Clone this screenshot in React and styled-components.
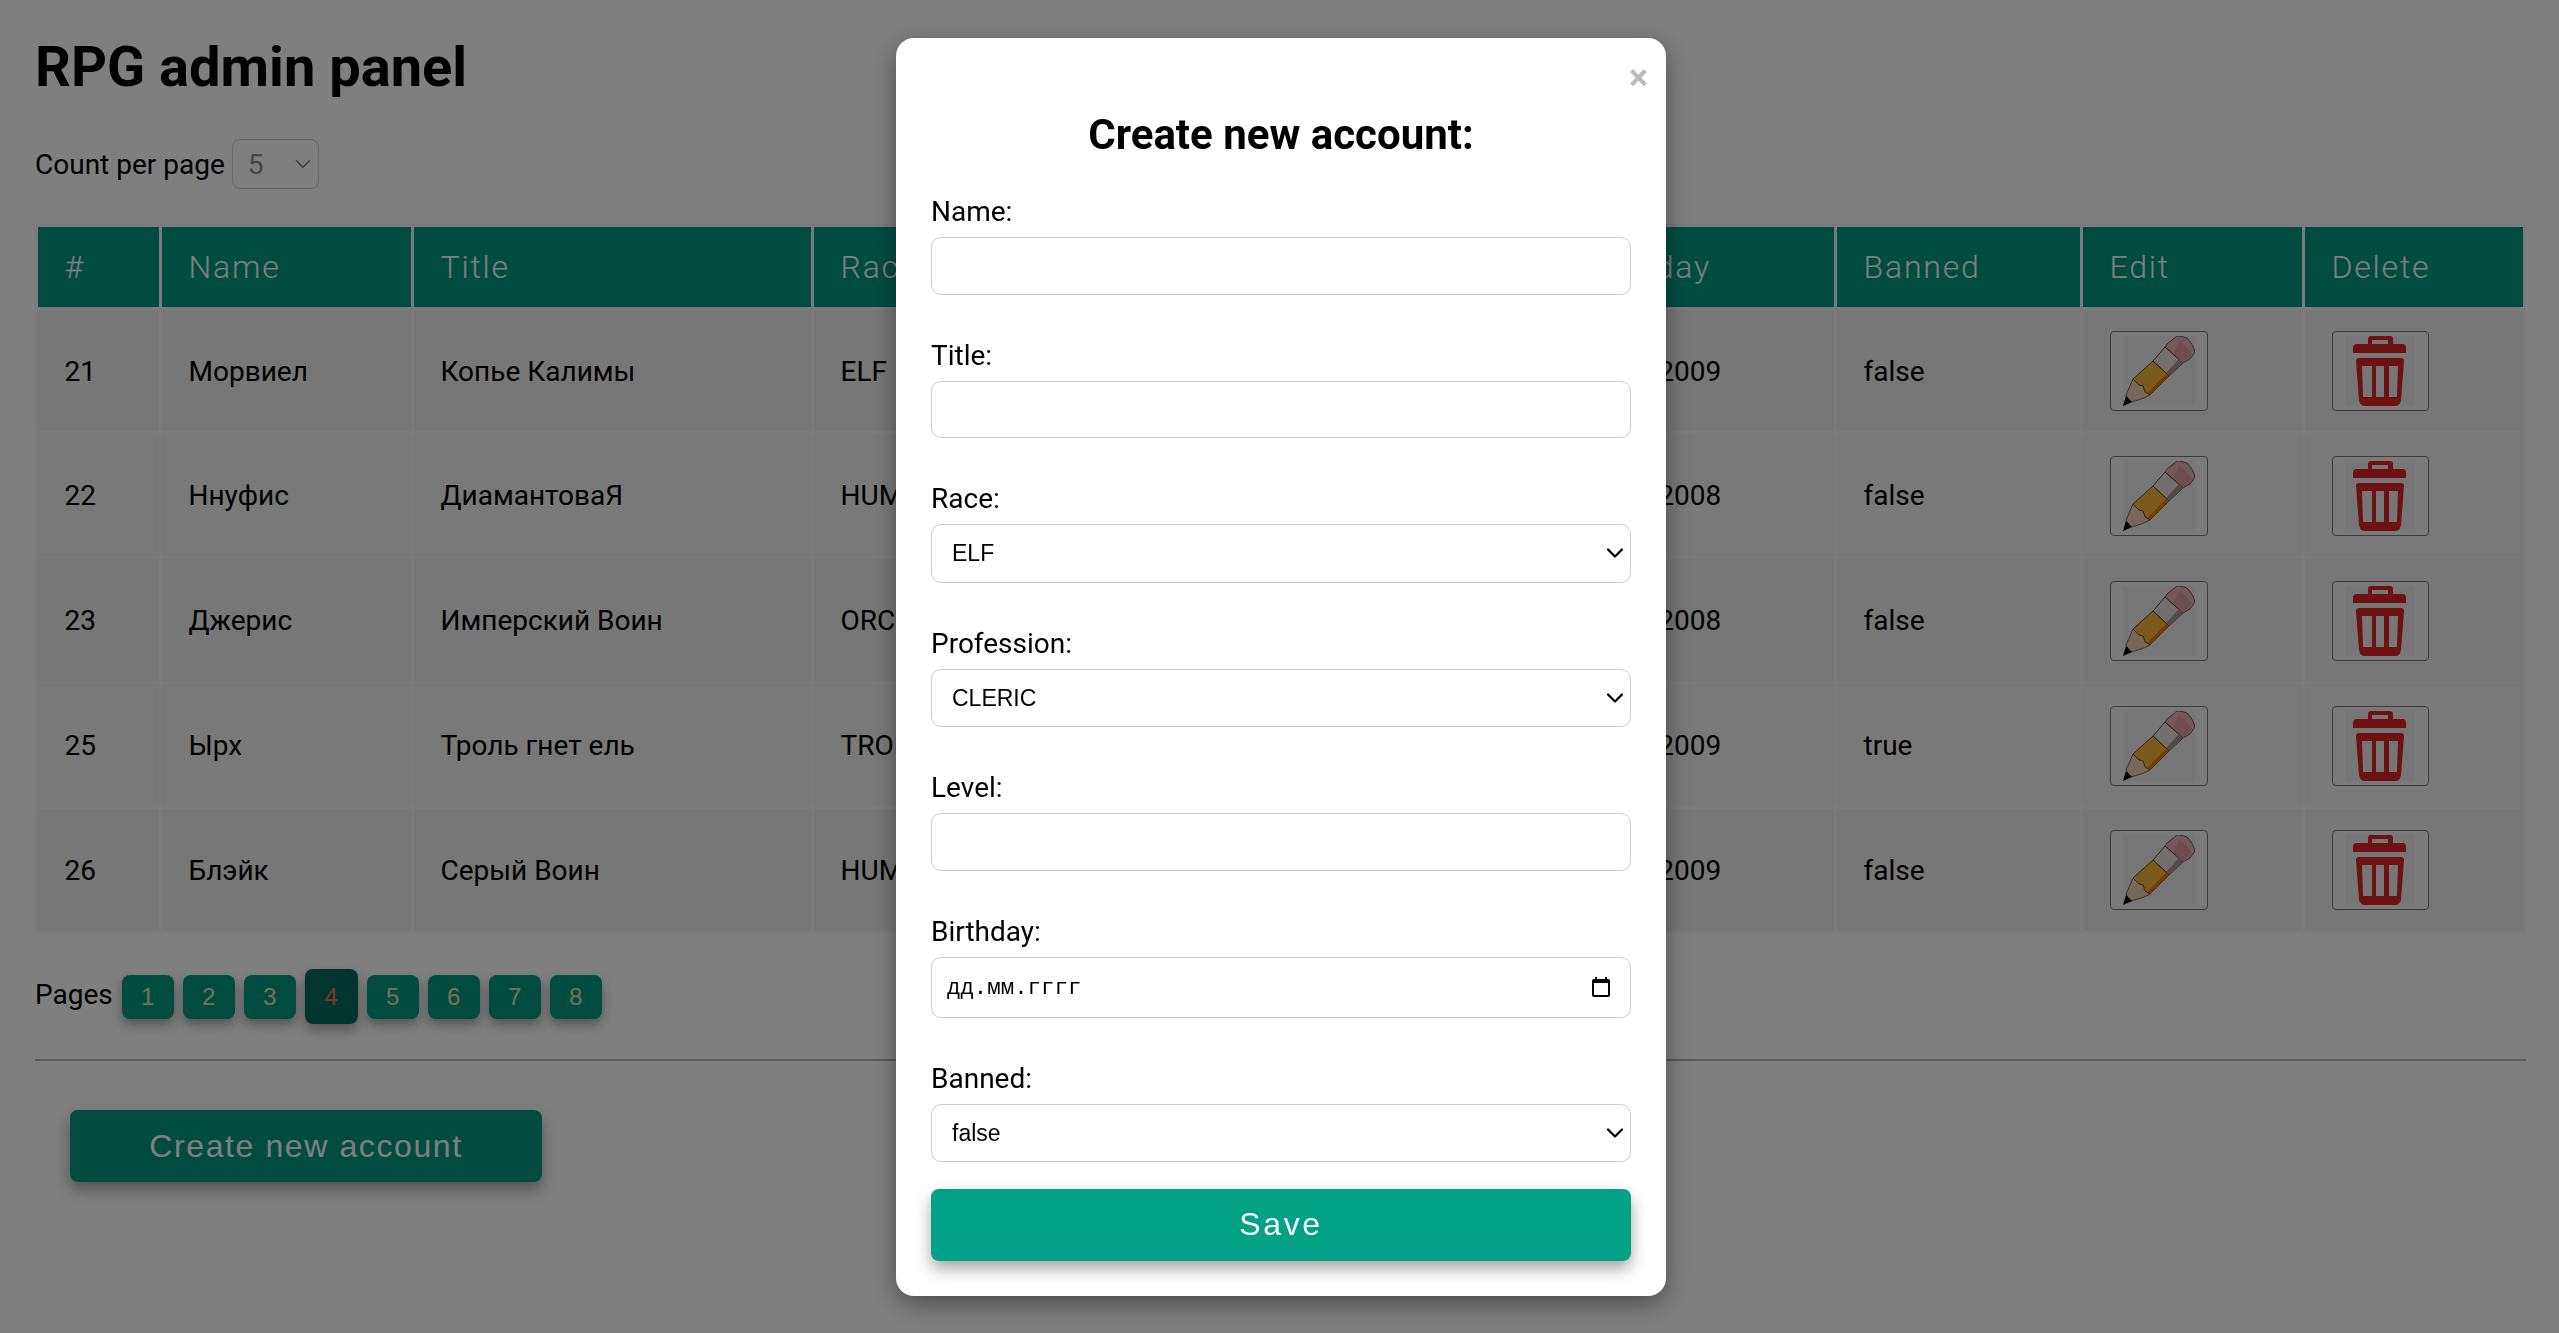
import React from "react";
import styled, { createGlobalStyle } from "styled-components";
import { ChevronDown } from "lucide-react";

const GlobalStyle = createGlobalStyle`
  html, body {
    margin: 0;
    height: 100%;
    background: #fff;
    font-family: Roboto, "Liberation Sans", sans-serif;
    color: #000;
  }
`;

const Page = styled.div`
  padding: 0 33px 0 35px;
  height: 1333px;
  box-sizing: border-box;
  overflow: hidden;
`;

const Heading = styled.h1`
  margin: 0;
  padding-top: 31px;
  font-size: 56px;
  line-height: 72px;
  font-weight: 700;
`;

const CountRow = styled.div`
  display: flex;
  align-items: center;
  gap: 7px;
  margin: 36px 0 35px;
  font-size: 28px;
`;

const CountBox = styled.div`
  position: relative;
  width: 87px;
  height: 50px;
`;

const CountSelect = styled.select`
  appearance: none;
  box-sizing: border-box;
  width: 100%;
  height: 100%;
  padding: 0 0 0 15px;
  border: 1px solid #ccc;
  border-radius: 8px;
  background: #fff;
  color: #888;
  font-family: Roboto, sans-serif;
  font-size: 28px;
`;

const Arrow = styled(ChevronDown)`
  position: absolute;
  right: ${(p) => p.$right}px;
  top: 50%;
  transform: translateY(-50%);
  color: ${(p) => p.$color};
  pointer-events: none;
`;

const Table = styled.table`
  table-layout: fixed;
  width: 2491px;
  border-collapse: separate;
  border-spacing: 3px;
  background: #f7f7f7;
`;

const HeadCell = styled.th`
  height: 80px;
  padding: 0 0 0 26.5px;
  box-sizing: border-box;
  background: #009a80;
  color: #fff;
  text-align: left;
  font-size: 32px;
  font-weight: 300;
  letter-spacing: 1.8px;
  white-space: nowrap;
  overflow: hidden;
`;

const Row = styled.tr`
  background: ${(p) => (p.$odd ? "#eeeeee" : "#f3f3f3")};
`;

const Cell = styled.td`
  height: ${(p) => p.$height}px;
  padding: 1px 0 0 26.5px;
  box-sizing: border-box;
  font-size: 28px;
  white-space: nowrap;
  overflow: hidden;
`;

const IconButton = styled.button`
  display: flex;
  align-items: center;
  justify-content: center;
  box-sizing: border-box;
  width: ${(p) => p.$width}px;
  height: 80px;
  padding: 0;
  border: 1px solid #767676;
  border-radius: 4px;
  background: #f5f5f5;
`;

const SoftGroup = styled.g`
  filter: blur(0.35px);
`;

const Pager = styled.div`
  display: flex;
  align-items: center;
  height: 55px;
  margin: 36px 0 0;
  font-size: 28px;
`;

const PagerLabel = styled.span`
  margin-right: 9px;
  position: relative;
  top: -2px;
`;

const PageButton = styled.button`
  box-sizing: border-box;
  width: ${(p) => (p.$active ? 53 : 52)}px;
  height: ${(p) => (p.$active ? 55 : 44)}px;
  margin-right: 9px;
  padding: 0;
  border: 0;
  border-radius: 8px;
  background: ${(p) => (p.$active ? "#056a5c" : "#009a80")};
  color: ${(p) => (p.$active ? "#e87a50" : "#f0e0a8")};
  font-family: "Liberation Sans", sans-serif;
  font-size: 24px;
  box-shadow: 0 6px 12px rgba(0, 0, 0, 0.35);
`;

const Divider = styled.hr`
  margin: 35px 0 0;
  height: 0;
  border: 0;
  border-top: 2px solid #b4b4b4;
`;

const CreateButton = styled.button`
  display: block;
  box-sizing: border-box;
  width: 472px;
  height: 72px;
  margin: 49px 0 0 35px;
  padding: 0;
  border: 0;
  border-radius: 8px;
  background: #009a80;
  color: #fff;
  font-family: "Liberation Sans", sans-serif;
  font-size: 32px;
  letter-spacing: 1.6px;
  box-shadow: 0 8px 16px rgba(0, 0, 0, 0.35);
`;

const SaveButton = styled(CreateButton)`
  width: 100%;
  margin: 0;
  padding-bottom: 1px;
  background: #03a185;
  letter-spacing: 2.6px;
`;

const Overlay = styled.div`
  position: fixed;
  inset: 0;
  display: flex;
  justify-content: center;
  align-items: flex-start;
  padding: 38px 0 0 3px;
  background: rgba(0, 0, 0, 0.5);
`;

const Modal = styled.div`
  position: relative;
  box-sizing: border-box;
  width: 770px;
  height: 1258px;
  padding: 69px 35px 0;
  border-radius: 18px;
  background: #fff;
  box-shadow: 0 8px 24px rgba(0, 0, 0, 0.4);
`;

const Close = styled.span`
  position: absolute;
  top: 18px;
  right: 18px;
  color: #bbb;
  font-size: 36px;
  line-height: 44px;
  font-weight: 700;
`;

const ModalTitle = styled.h2`
  margin: 0 0 32px;
  text-align: center;
  font-size: 42px;
  line-height: 56px;
  font-weight: 700;
`;

const Field = styled.div`
  margin-bottom: ${(p) => (p.$last ? 26.5 : 44)}px;
`;

const Label = styled.label`
  display: block;
  height: 33px;
  margin-bottom: 9px;
  font-size: 28px;
  line-height: 33px;
`;

const TextInput = styled.input`
  display: block;
  box-sizing: border-box;
  width: 100%;
  height: 57.5px;
  border: 1px solid #ccc;
  border-radius: 10px;
  background: #fff;
`;

const SelectBox = styled.div`
  position: relative;
  height: 58.5px;
`;

const FormSelect = styled.select`
  appearance: none;
  box-sizing: border-box;
  width: 100%;
  height: 100%;
  padding: 0 0 0 20px;
  border: 1px solid #ccc;
  border-radius: 10px;
  background: #fff;
  color: #000;
  font-family: "Liberation Sans", sans-serif;
  font-size: 23px;
`;

const DateBox = styled.div`
  display: flex;
  align-items: center;
  justify-content: space-between;
  box-sizing: border-box;
  height: 61px;
  padding: 0 20px 0 15px;
  border: 1px solid #ccc;
  border-radius: 10px;
  font-family: "Liberation Mono", monospace;
  font-size: 22.4px;
`;

const DateText = styled.span`
  padding-top: 2px;
`;

const rows = [
  { id: 21, name: "Морвиел", title: "Копье Калимы", race: "ELF", profession: "WARRIOR", level: 35, birthday: "11.05.2009", banned: "false" },
  { id: 22, name: "Ннуфис", title: "ДиамантоваЯ", race: "HUMAN", profession: "CLERIC", level: 43, birthday: "02.11.2008", banned: "false" },
  { id: 23, name: "Джерис", title: "Имперский Воин", race: "ORC", profession: "WARLOCK", level: 24, birthday: "23.08.2008", banned: "false" },
  { id: 25, name: "Ырх", title: "Троль гнет ель", race: "TROLL", profession: "WARRIOR", level: 18, birthday: "14.03.2009", banned: "true" },
  { id: 26, name: "Блэйк", title: "Серый Воин", race: "HUMAN", profession: "PALADIN", level: 27, birthday: "06.07.2009", banned: "false" },
];

const rowHeights = [121, 122, 122, 122, 121];

const columns = [
  ["#", 121],
  ["Name", 249],
  ["Title", 397],
  ["Race", 286],
  ["Profession", 277],
  ["Level", 168],
  ["Birthday", 280],
  ["Banned", 243],
  ["Edit", 219],
  ["Delete", 218],
];

function PencilIcon() {
  return (
    <svg width="72" height="70" viewBox="0 0 72 70">
      <rect width="72" height="70" fill="#ececec" />
      <SoftGroup>
        <path d="M42 11 L44 8 L54 0 C58 0 61 1 64 2 C68 6 71 11 72 16 L67 23 L60 27 Z" fill="#e8b0b4" stroke="#5a4a4a" strokeWidth="0.9" />
        <path d="M56 5 C61 8 66 13 69 18 L60 27 L50 18 Z" fill="#dc9aa0" />
        <path d="M30 25 L42 11 L60 27 L46 40 Z" fill="#e6dede" stroke="#4a4040" strokeWidth="1" />
        <path d="M46 40 L60 27 L56 23 L43 37 Z" fill="#a89490" />
        <path d="M10 43 L30 25 L46 40 L27 59 L22 56 L20 50 L16 49 Z" fill="#f5b53a" stroke="#4a3818" strokeWidth="0.9" />
        <path d="M46 40 L27 59 L24.5 56.5 L43.5 37.5 Z" fill="#e87a10" />
        <path d="M10 43 L16 49 L20 50 L22 56 L27 59 C20 63 12 65 7 66 L3 59 Z" fill="#f0cdb0" stroke="#5a4030" strokeWidth="0.8" />
        <path d="M0 70 L3 60 L9 66 Z" fill="#000" />
      </SoftGroup>
    </svg>
  );
}

function TrashIcon() {
  return (
    <svg width="70" height="70" viewBox="0 0 70 70">
      <rect width="70" height="70" fill="#ececec" />
      <SoftGroup>
        <path
          fillRule="evenodd"
          fill="#dc2222"
          d="M26 0 H45 Q48 0 48 3 V8 H58 Q61 8 61 12 V17 H8 V12 Q8 8 12 8 H23 V3 Q23 0 26 0 Z M27 4 V8 H43 V4 Z"
        />
        <path
          fillRule="evenodd"
          fill="#dc2222"
          d="M14 22 H56 Q59 22 59 25 L56 64 Q55 70 50 70 H20 Q15 70 14 64 L11 25 Q11 22 14 22 Z M17 30 L18 61 H27 V30 Z M31 30 V61 H39 V30 Z M44 30 V61 H52 L53 30 Z"
        />
      </SoftGroup>
    </svg>
  );
}

function CalendarIcon() {
  return (
    <svg width="18" height="20" viewBox="0 0 18 20">
      <path d="M3 0 H5 V2 H13 V0 H15 V2 H16 Q18 2 18 4 V18 Q18 20 16 20 H2 Q0 20 0 18 V4 Q0 2 2 2 H3 Z M2 6 V18 H16 V6 Z" fill="#000" />
    </svg>
  );
}

function FormSelectField({ label, value, last }) {
  return (
    <Field $last={last}>
      <Label>{label}</Label>
      <SelectBox>
        <FormSelect defaultValue={value}>
          <option>{value}</option>
        </FormSelect>
        <Arrow size={28} strokeWidth={1.9} $right={2} $color="#000" />
      </SelectBox>
    </Field>
  );
}

export default function App() {
  return (
    <>
      <GlobalStyle />
      <Page>
        <Heading>RPG admin panel</Heading>
        <CountRow>
          <span>Count per page</span>
          <CountBox>
            <CountSelect defaultValue="5">
              <option>5</option>
            </CountSelect>
            <Arrow size={26} strokeWidth={1.5} $right={3} $color="#777" />
          </CountBox>
        </CountRow>
        <Table>
          <colgroup>
            {columns.map(([name, width]) => (
              <col key={name} style={{ width }} />
            ))}
          </colgroup>
          <thead>
            <tr>
              {columns.map(([name]) => (
                <HeadCell key={name}>{name}</HeadCell>
              ))}
            </tr>
          </thead>
          <tbody>
            {rows.map((r, i) => (
              <Row key={r.id} $odd={i % 2 === 0}>
                <Cell $height={rowHeights[i]}>{r.id}</Cell>
                <Cell>{r.name}</Cell>
                <Cell>{r.title}</Cell>
                <Cell>{r.race}</Cell>
                <Cell>{r.profession}</Cell>
                <Cell>{r.level}</Cell>
                <Cell>{r.birthday}</Cell>
                <Cell>{r.banned}</Cell>
                <Cell>
                  <IconButton $width={98}>
                    <PencilIcon />
                  </IconButton>
                </Cell>
                <Cell>
                  <IconButton $width={97}>
                    <TrashIcon />
                  </IconButton>
                </Cell>
              </Row>
            ))}
          </tbody>
        </Table>
        <Pager>
          <PagerLabel>Pages</PagerLabel>
          {[1, 2, 3, 4, 5, 6, 7, 8].map((n) => (
            <PageButton key={n} $active={n === 4}>
              {n}
            </PageButton>
          ))}
        </Pager>
        <Divider />
        <CreateButton>Create new account</CreateButton>
      </Page>
      <Overlay>
        <Modal>
          <Close>×</Close>
          <ModalTitle>Create new account:</ModalTitle>
          <Field>
            <Label>Name:</Label>
            <TextInput />
          </Field>
          <Field>
            <Label>Title:</Label>
            <TextInput />
          </Field>
          <FormSelectField label="Race:" value="ELF" />
          <FormSelectField label="Profession:" value="CLERIC" />
          <Field>
            <Label>Level:</Label>
            <TextInput />
          </Field>
          <Field>
            <Label>Birthday:</Label>
            <DateBox>
              <DateText>дд.мм.гггг</DateText>
              <CalendarIcon />
            </DateBox>
          </Field>
          <FormSelectField label="Banned:" value="false" last />
          <SaveButton>Save</SaveButton>
        </Modal>
      </Overlay>
    </>
  );
}
